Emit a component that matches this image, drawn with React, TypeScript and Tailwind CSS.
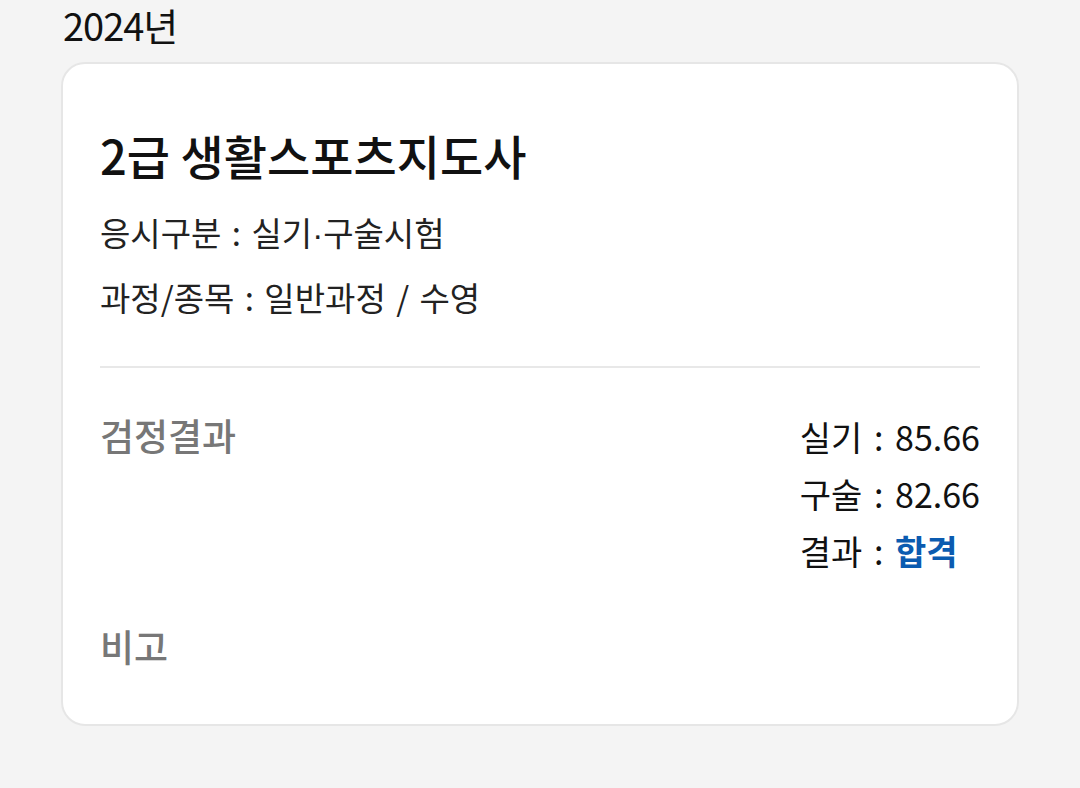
import React from "react";

const font = { fontFamily: '"Noto Sans CJK KR", "Noto Sans", sans-serif' };
const dot = { fontFamily: '"Liberation Sans", sans-serif' };

export default function App() {
  return (
    <div className="w-[1080px] h-[788px] bg-[#f4f4f4] overflow-hidden" style={font}>
      <div className="pl-[63px] pt-[2px] text-[38px] leading-[46px] text-[#111] tracking-[-1px]">2024년</div>
      <div className="ml-[61px] mt-[14px] w-[958px] h-[664px] bg-white border-2 border-[#e6e6e6] rounded-[24px] px-[37px]">
        <div className="pt-[63px] text-[47px] leading-[56px] font-medium text-[#111]">2급 생활스포츠지도사</div>
        <div className="mt-[28px] text-[33px] leading-[42px] text-[#222] [word-spacing:3px]">
          응시구분 : 실기<span style={dot}>·</span>구술시험
        </div>
        <div className="mt-[20px] text-[33px] leading-[42px] text-[#222] [word-spacing:3px]">과정/종목 : 일반과정 / 수영</div>
        <div className="mt-[48px] h-[2px] bg-[#e8e8e8]" />
        <div className="mt-[44px] flex justify-between items-start">
          <div className="text-[37px] leading-[46px] font-medium text-[#777]">검정결과</div>
          <div className="text-[34px] leading-[57px] text-[#111] -mt-[4px] [word-spacing:4px]">
            <div>실기 : 85.66</div>
            <div>구술 : 82.66</div>
            <div>
              결과 : <span className="text-[#0b5bb0] font-bold">합격</span>
            </div>
          </div>
        </div>
        <div className="mt-[44px] text-[37px] leading-[46px] font-medium text-[#777]">비고</div>
      </div>
    </div>
  );
}
